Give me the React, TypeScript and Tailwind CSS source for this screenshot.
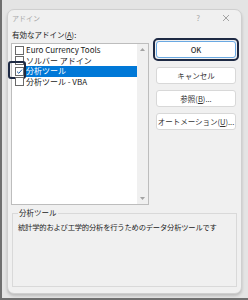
const items = [
  { name: 'Euro Currency Tools', checked: false },
  { name: 'ソルバー アドイン', checked: false },
  { name: '分析ツール', checked: true, selected: true },
  { name: '分析ツール - VBA', checked: false },
];

function Check() {
  return (
    <svg width="7" height="7" viewBox="0 0 7 7" fill="none">
      <polyline points="1,3.6 2.8,5.3 6,1.6" stroke="#1f5fa8" strokeWidth="1" />
    </svg>
  );
}

function Btn({ label, primary }: { label: React.ReactNode; primary?: boolean }) {
  const btn = (
    <div
      className={`h-[17px] w-[80px] flex items-center justify-center bg-white rounded-[3px] text-[7.5px] text-[#333] border ${
        primary ? 'border-[#6aa9e2] font-medium' : 'border-[#d8d8d8]'
      }`}
    >
      {label}
    </div>
  );
  if (!primary) return <div className="pl-[3px]">{btn}</div>;
  return (
    <div className="border-2 border-[#1e2a44] rounded-[5px] p-[1px] w-[86px]">{btn}</div>
  );
}

export default function App() {
  return (
    <div
      className="w-[248px] h-[300px] bg-[#e4e4e4] border-l-2 border-b-2 border-[#6f6f6f] pl-[5px] pt-[9px] overflow-hidden"
      style={{ fontFamily: '"Noto Sans CJK JP", "Noto Sans", sans-serif' }}
    >
      <div className="w-[235px] h-[285px] rounded-[7px] bg-[#f0f0f0] border border-[#cfcfcf] shadow-[0_2px_3px_rgba(0,0,0,0.18)] flex flex-col">
        {/* title bar */}
        <div className="h-[16px] flex items-center pl-[4px] text-[#a8a8a8] text-[7px]">
          <span>アドイン</span>
          <span className="ml-auto text-[8px] mr-[22px]">?</span>
          <svg width="8" height="8" viewBox="0 0 8 8" className="mr-[11px]">
            <path d="M1 1L7 7M7 1L1 7" stroke="#9a9a9a" strokeWidth="0.9" />
          </svg>
        </div>

        <div className="flex pl-[3px]">
          <div className="flex flex-col w-[138px]">
            <div className="h-[17px] pt-[4px] pl-[1px] leading-[10px] text-[7.5px] text-[#222]">
              有効なアドイン(<span className="underline">A</span>):
            </div>
            <div className="h-[162px] bg-white border border-[#bdbdbd] flex">
              <div className="flex-1 pt-[1px] flex flex-col">
                {items.map((it) => (
                  <div key={it.name} className="h-[10.5px] flex items-center relative">
                    <div className="w-[13px] flex justify-end pr-[1px]">
                      <div className="w-[9px] h-[9px] border border-[#6a6a6a] bg-white flex items-center justify-center">
                        {it.checked && <Check />}
                      </div>
                    </div>
                    <div
                      className={`flex-1 h-full flex items-center pl-[1px] text-[8px] leading-none ${
                        it.selected ? 'bg-[#0078d7] text-white' : 'text-[#222]'
                      }`}
                    >
                      {it.name}
                    </div>
                    {it.selected && (
                      <div className="absolute left-[-4px] top-[-5px] w-[18px] h-[18px] border-2 border-[#1e2a44] rounded-[3px]" />
                    )}
                  </div>
                ))}
              </div>
              <div className="w-[11px] bg-[#f0f0f0] flex flex-col items-center justify-between py-[4px]">
                <svg width="5" height="3" viewBox="0 0 5 3">
                  <polygon points="2.5,0 5,3 0,3" fill="#a3a3a3" />
                </svg>
                <svg width="5" height="3" viewBox="0 0 5 3">
                  <polygon points="0,0 5,0 2.5,3" fill="#a3a3a3" />
                </svg>
              </div>
            </div>
          </div>

          <div className="flex flex-col gap-[6px] pt-[12px] pl-[4px]">
            <Btn label="OK" primary />
            <Btn label="キャンセル" />
            <Btn
              label={
                <>
                  参照(<span className="underline">B</span>)...
                </>
              }
            />
            <Btn
              label={
                <>
                  オートメーション(<span className="underline">U</span>)...
                </>
              }
            />
          </div>
        </div>

        <fieldset className="mx-[4px] mt-[3px] h-[79px] border border-[#d9d9d9] px-[5px]">
          <legend className="text-[7.5px] text-[#222] px-[1px] leading-[10px]">分析ツール</legend>
          <div className="text-[7.3px] text-[#222] pt-[4px] tracking-[-0.2px] whitespace-nowrap">
            統計学的および工学的分析を行うためのデータ分析ツールです
          </div>
        </fieldset>
      </div>
    </div>
  );
}
